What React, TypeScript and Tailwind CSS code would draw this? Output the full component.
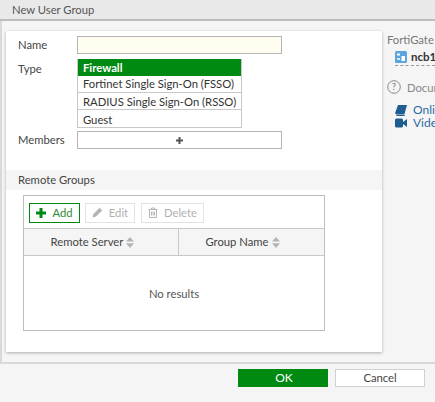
import React from "react";

const Sort = () => (
  <svg width="8" height="11" viewBox="0 0 8 11" className="ml-[3px] shrink-0" fill="#b4b4b4">
    <path d="M4 0 L8 4.6 H0 Z M0 6.2 H8 L4 11 Z" />
  </svg>
);

export default function App() {
  return (
    <div className="w-[435px] h-[402px] overflow-hidden flex flex-col bg-[#f5f5f5] text-[#333] text-[11.25px] leading-none font-['Lato','Noto_Sans',sans-serif]">
      <div className="h-[21px] shrink-0 bg-[#e9e9e9] border-b-[2px] border-[#bdbdbd] pl-[12px] pt-[1px] flex items-center text-[#555]">
        New User Group
      </div>
      <div className="flex-1 flex min-h-0 border-l-[2px] border-[#d9d9d9]">
        <div className="flex-1 flex min-w-0 pl-[4px] pt-[10px]">
          <div className="w-[376px] h-[321px] shrink-0 bg-white shadow-[0_1px_3px_rgba(0,0,0,0.3)] pt-[5px]">
            <div className="flex h-[18px] items-center">
              <div className="w-[71px] pl-[12px] text-[#444]">Name</div>
              <div className="w-[205px] h-[18px] bg-[#fffdf0] border border-[#b5b5b5]" />
            </div>
            <div className="flex mt-[5px]">
              <div className="w-[71px] pl-[12px] pt-[4px] text-[#444]">Type</div>
              <div className="w-[165px] border border-[#c8c8c8] border-t-0 flex flex-col">
                <div className="h-[17px] bg-[#008a12] text-white font-bold flex items-center pl-[5px] pt-[1px]">Firewall</div>
                <div className="h-[17px] border-b border-[#c8c8c8] flex items-center pl-[5px] whitespace-nowrap">Fortinet Single Sign-On (FSSO)</div>
                <div className="h-[17px] border-b border-[#c8c8c8] flex items-center pl-[5px] pt-[1px] whitespace-nowrap">RADIUS Single Sign-On (RSSO)</div>
                <div className="h-[17px] flex items-center pl-[5px] pt-[2px]">Guest</div>
              </div>
            </div>
            <div className="flex h-[18px] items-center mt-[3px]">
              <div className="w-[71px] pl-[12px] text-[#444]">Members</div>
              <div className="w-[205px] h-[18px] border border-[#b5b5b5] flex items-center justify-center">
                <svg width="7" height="7" viewBox="0 0 7 7" fill="#555"><path d="M2.5 0h2v2.5H7v2H4.5V7h-2V4.5H0v-2h2.5z" /></svg>
              </div>
            </div>
            <div className="mt-[21px] h-[20px] bg-[#f5f5f5] flex items-center pl-[12px] text-[#444]">Remote Groups</div>
            <div className="ml-[17px] mt-[5px] w-[302px] h-[136px] border border-[#bdbdbd] flex flex-col">
              <div className="h-[33px] shrink-0 flex items-center pl-[5px] pt-[1px] gap-[5px] border-b border-[#c8c8c8]">
                <div className="w-[51px] h-[20px] border border-[#008a12] flex items-center justify-center gap-[6px] text-[#2e8b3a]">
                  <svg width="10" height="10" viewBox="0 0 10 10" fill="#008a12"><path d="M3.5 0h3v3.5H10v3H6.5V10h-3V6.5H0v-3h3.5z" /></svg>
                  Add
                </div>
                <div className="w-[50px] h-[20px] border border-[#e3e3e3] flex items-center justify-center gap-[6px] text-[#b0b0b0]">
                  <svg width="11" height="11" viewBox="0 0 11 11" fill="#b4b4b4"><path d="M7.6 0.8 L10.2 3.4 L4 9.6 L0.6 10.4 L1.4 7 Z" /></svg>
                  Edit
                </div>
                <div className="w-[63px] h-[20px] ml-[1px] border border-[#e3e3e3] flex items-center justify-center gap-[6px] text-[#b0b0b0]">
                  <svg width="10" height="11" viewBox="0 0 10 11" fill="none" stroke="#b4b4b4" strokeWidth="1"><path d="M0.5 2.5h9M3.5 2.5V1h3v1.5M1.5 2.5v8h7v-8M3.5 4.5v4M5 4.5v4M6.5 4.5v4" /></svg>
                  Delete
                </div>
              </div>
              <div className="h-[27px] shrink-0 bg-[#f5f5f5] border-b border-[#c8c8c8] flex text-[#444]">
                <div className="w-[155px] border-r border-[#c8c8c8] flex items-center justify-center pr-[17px]">Remote Server<Sort /></div>
                <div className="flex-1 flex items-center justify-center pr-[18px]">Group Name<Sort /></div>
              </div>
              <div className="flex-1 flex items-center justify-center text-[#555] pt-[1px]">No results</div>
            </div>
          </div>
          <div className="ml-[5px] flex-1 min-w-0 overflow-hidden whitespace-nowrap pt-[3px]">
            <div className="text-[#777]">FortiGate</div>
            <div className="ml-[8px] mt-[6px] h-[15px] border-b border-dashed border-[#999] flex items-start gap-[4px]">
              <svg width="12" height="12" viewBox="0 0 12 12" className="shrink-0"><rect width="12" height="12" rx="1.5" fill="#5aa5de" /><rect x="2" y="2.5" width="3" height="2" fill="#fff" /><rect x="6.5" y="5" width="3.5" height="5" fill="#fff" /><rect x="2" y="7" width="3" height="2" fill="#cfe6f7" /></svg>
              <span className="font-bold text-[#333] text-[11.5px]">ncb1</span>
            </div>
            <div className="flex items-center mt-[14px] gap-[6px]">
              <svg width="14" height="14" viewBox="0 0 14 14" className="shrink-0"><circle cx="7" cy="7" r="6.3" fill="none" stroke="#888" /><text x="7" y="10.3" textAnchor="middle" fontSize="9.5" fill="#777">?</text></svg>
              <span className="text-[#888]">Documentation</span>
            </div>
            <div className="ml-[8px] mt-[10px] flex items-center gap-[6px] text-[#2b6ca3] text-[12px]">
              <svg width="12" height="11" viewBox="0 0 12 11" className="shrink-0" fill="#1f5c8f"><path d="M3 0h9L9.5 9H1.2C.3 9 0 8.2 .3 7.4z" /><path d="M1 9.6h8.6V11H1.6z" /></svg>
              Online Help
            </div>
            <div className="ml-[8px] mt-[1px] flex items-center gap-[6px] text-[#2b6ca3] text-[12px]">
              <svg width="12" height="10" viewBox="0 0 12 10" className="shrink-0" fill="#1f5c8f"><rect width="8" height="9" y="0.5" rx="1.5" /><path d="M8 4l4-3v8l-4-3z" /></svg>
              Video Tutorials
            </div>
          </div>
        </div>
      </div>
      <div className="h-[40px] shrink-0 border-t-[2px] border-[#d9d9d9] flex justify-end gap-[7px] pr-[10px] pt-[5px]">
        <div className="w-[90px] h-[18px] bg-[#008a12] text-white flex items-center justify-center pl-[2px] text-[12px]">OK</div>
        <div className="w-[90px] h-[18px] bg-white border border-[#d0d0d0] flex items-center justify-center text-[#444]">Cancel</div>
      </div>
    </div>
  );
}
